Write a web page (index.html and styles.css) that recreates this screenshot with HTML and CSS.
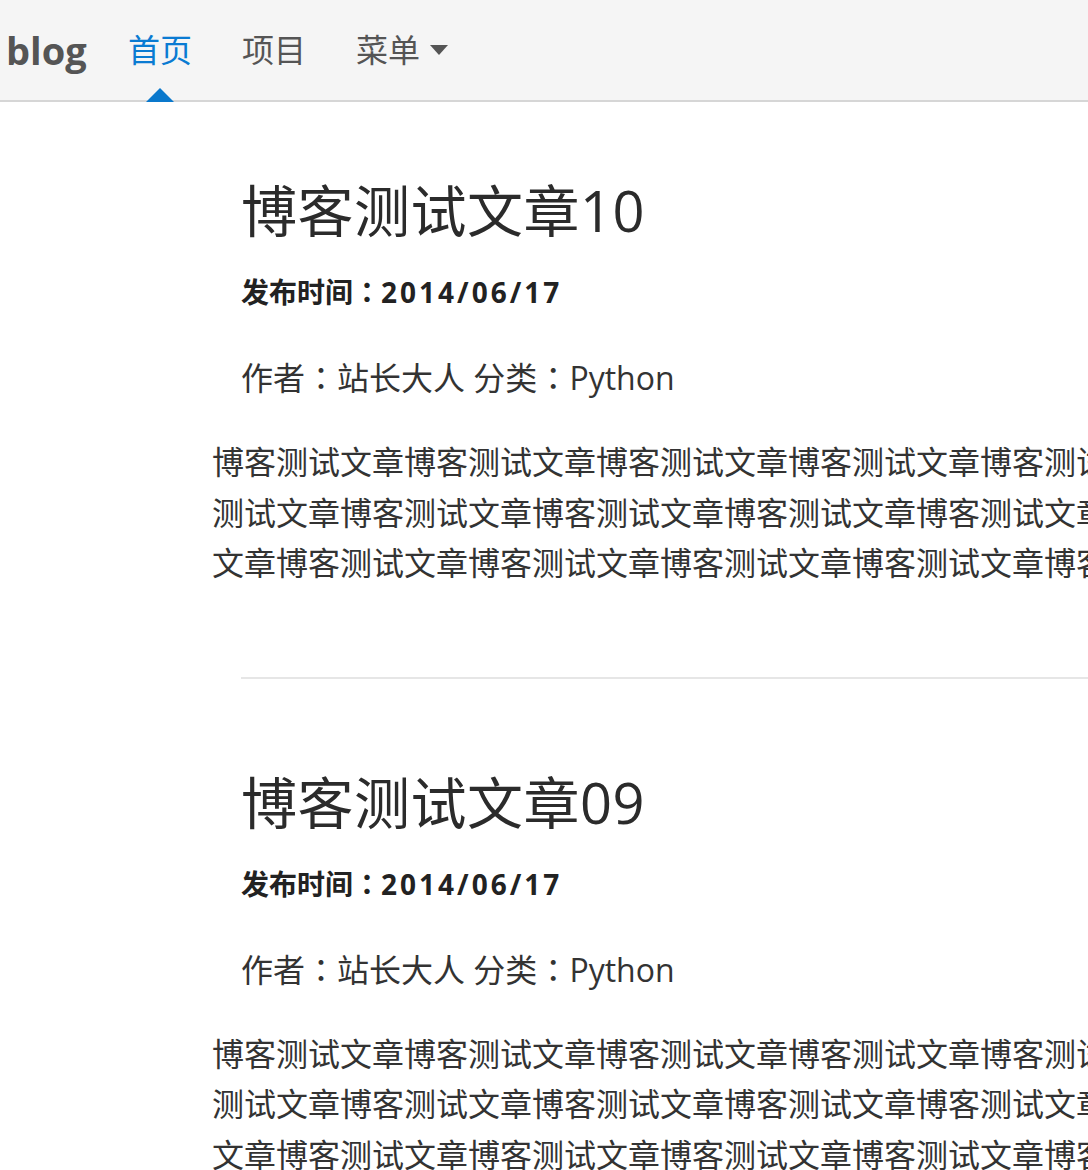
FILE: index.html
```html
<!DOCTYPE html>
<html lang="zh-CN">
<head>
<meta charset="utf-8">
<title>blog</title>
<link rel="stylesheet" href="styles.css">
</head>
<body>
<header class="navbar">
  <a class="brand" href="#">blog</a>
  <ul class="nav">
    <li class="nav-item active"><a href="#">首页</a><span class="pointer"></span></li>
    <li class="nav-item"><a href="#">项目</a></li>
    <li class="nav-item dropdown"><a href="#">菜单<span class="caret"></span></a></li>
  </ul>
</header>
<main class="main">
  <article class="post">
    <div class="post-head">
      <h1 class="post-title">博客测试文章10</h1>
      <p class="post-date">发布时间<span class="colon" lang="zh-TW">：</span><span class="date">2014/06/17</span></p>
      <p class="post-meta">作者<span class="colon" lang="zh-TW">：</span>站长大人 分类<span class="colon" lang="zh-TW">：</span>Python</p>
    </div>
    <p class="post-body">博客测试文章博客测试文章博客测试文章博客测试文章博客测试文章博客测试文章博客测试文章博客测试文章博客测试文章博客测试文章博客测试文章博客测试文章博客测试文章博客测试文章博客测试文章博客测试文章</p>
  </article>
  <hr class="divider">
  <article class="post">
    <div class="post-head">
      <h1 class="post-title">博客测试文章09</h1>
      <p class="post-date">发布时间<span class="colon" lang="zh-TW">：</span><span class="date">2014/06/17</span></p>
      <p class="post-meta">作者<span class="colon" lang="zh-TW">：</span>站长大人 分类<span class="colon" lang="zh-TW">：</span>Python</p>
    </div>
    <p class="post-body">博客测试文章博客测试文章博客测试文章博客测试文章博客测试文章博客测试文章博客测试文章博客测试文章博客测试文章博客测试文章博客测试文章博客测试文章博客测试文章博客测试文章博客测试文章博客测试文章</p>
  </article>
</main>
</body>
</html>
```

FILE: styles.css
```css
html {
  overflow-x: hidden;
}
html::-webkit-scrollbar {
  display: none;
}
body {
  margin: 0;
  background: #ffffff;
  font-family: "Open Sans", "Noto Sans CJK SC", sans-serif;
  color: #333333;
  overflow-x: hidden;
}
a {
  text-decoration: none;
  color: inherit;
}

.navbar {
  display: flex;
  align-items: stretch;
  height: 100px;
  padding-left: 6px;
  background: #f5f5f5;
  border-bottom: 2px solid #d6d6d6;
}
.brand {
  flex: none;
  width: 97px;
  font-size: 38px;
  font-weight: 700;
  line-height: 100px;
  color: #555555;
}
.nav {
  display: flex;
  margin: 0;
  padding: 0;
  list-style: none;
}
.nav-item {
  position: relative;
  font-size: 32px;
  line-height: 100px;
  color: #555555;
}
.nav-item a {
  display: flex;
  align-items: center;
  padding: 0 25px;
}
.nav-item.active {
  color: #0a7bd2;
}
.pointer {
  position: absolute;
  left: 50%;
  bottom: -2px;
  margin-left: -14px;
  width: 0;
  height: 0;
  border-left: 14px solid transparent;
  border-right: 14px solid transparent;
  border-bottom: 14px solid #0a78cc;
}
.caret {
  display: inline-block;
  margin-left: 10px;
  width: 0;
  height: 0;
  border-left: 9px solid transparent;
  border-right: 9px solid transparent;
  border-top: 10px solid #555555;
}

.main {
  padding-left: 212px;
  padding-top: 77px;
}
.post-head {
  padding-left: 29px;
}
.colon {
  font-family: "Noto Sans CJK TC", "Noto Sans CJK JP", sans-serif;
  line-height: 0;
}
.post-title {
  margin: 0;
  font-size: 56px;
  font-weight: 400;
  line-height: 62px;
  letter-spacing: 0.5px;
  color: #2b2b2b;
}
.post-date {
  margin: 31px 0 0;
  font-size: 28px;
  font-weight: 700;
  line-height: 40px;
  color: #222222;
}
.date {
  letter-spacing: 3px;
}
.post-meta {
  margin: 44px 0 0;
  font-size: 32px;
  line-height: 44px;
  color: #333333;
}
.post-body {
  margin: 37px 0 0;
  width: 1040px;
  font-size: 32px;
  line-height: 50.5px;
  color: #333333;
}
.divider {
  margin: 88px 0 92px 29px;
  width: 1200px;
  height: 2px;
  border: 0;
  background: #e6e6e6;
}
```
